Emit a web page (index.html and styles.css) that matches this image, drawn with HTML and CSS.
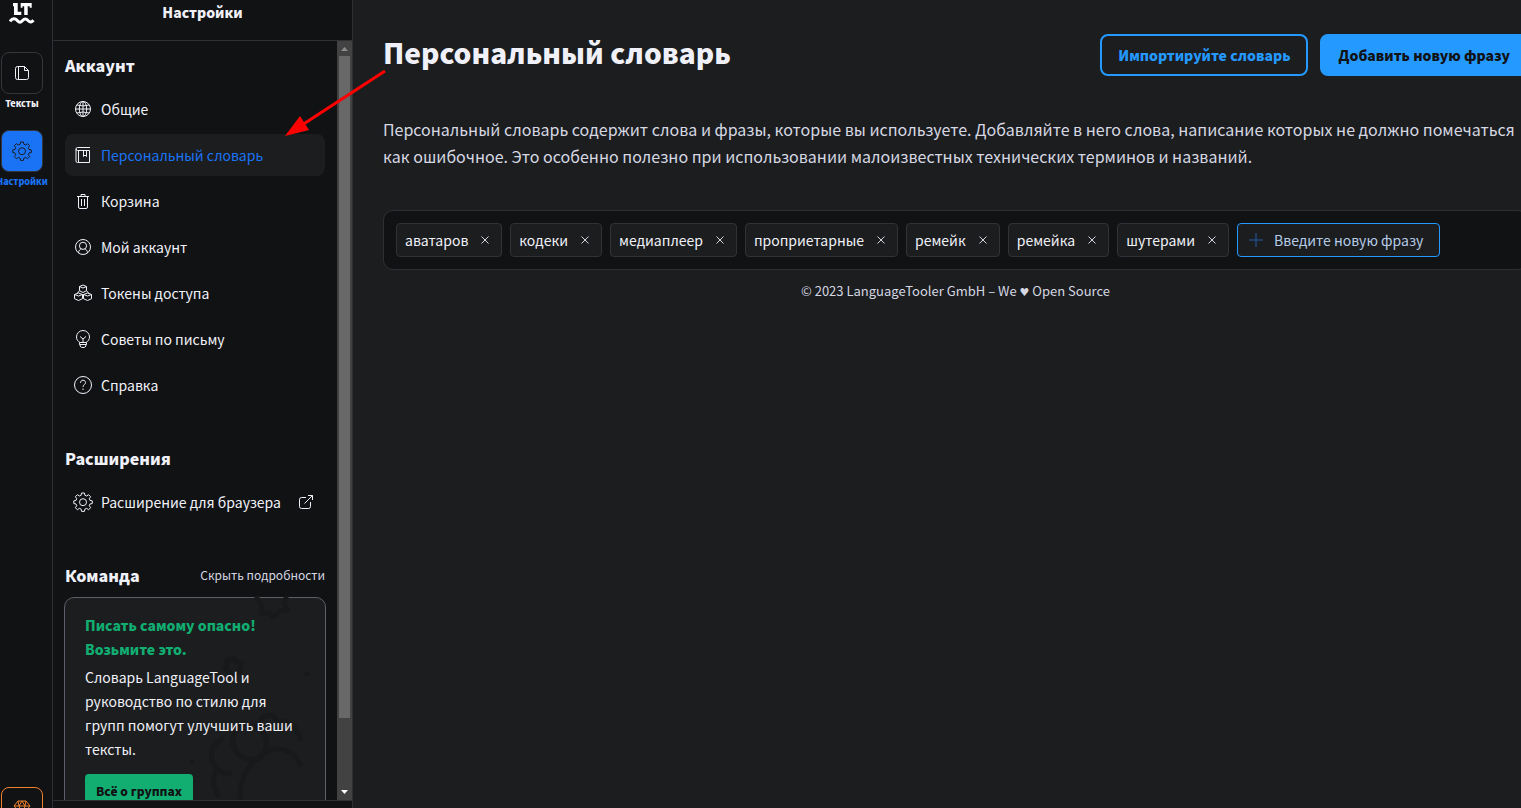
FILE: index.html
```html
<!DOCTYPE html>
<html lang="ru">
<head>
<meta charset="utf-8">
<title>Персональный словарь</title>
<link rel="stylesheet" href="styles.css">
</head>
<body>
<svg class="defs" width="0" height="0" aria-hidden="true">
  <symbol id="gear" viewBox="0 0 20 20"><path d="M8.6 1h2.8l.5 2.3 1.7.7 2-1.3 2 2-1.3 2 .7 1.7 2.3.5v2.6l-2.3.5-.7 1.7 1.3 2-2 2-2-1.3-1.7.7-.5 2.3H8.6l-.5-2.3-1.7-.7-2 1.3-2-2 1.3-2-.7-1.7L.8 11.500V8.900l2.200-.5.7-1.700-1.300-2 2-2 2 1.300 1.700-.7z"/><circle cx="10" cy="10.200" r="3.500"/></symbol>
  <symbol id="cross" viewBox="0 0 10 10"><path d="M1.500 1.500l7 7M8.500 1.500l-7 7"/></symbol>
</svg>
<div class="app">
  <nav class="rail" aria-label="Разделы">
    <a class="logo" href="#" aria-label="LanguageTool">
      <svg width="26" height="22" viewBox="0 0 26 22"><path class="logo-letters" d="M4 1h4.700v8.700h3.600V13H5V4.200H4zM11.700 1h11v4.700h-2V4.200h-2V13h-3.500V4.200h-1.700v1.500h-1.800z"/><path class="logo-wave" d="M1 19.500c2.500-3.500 5-3.500 7.500-.8 1.800 2 3 2 4.800 0 2.200-2.300 3.800-2.300 6 0 2 2 3.500 1.500 5.200-.4"/></svg>
    </a>
    <a class="rail-item" href="#">
      <span class="rail-icon"><svg width="16" height="16" viewBox="0 0 16 16"><path d="M3.500 1.500h7l4 4v7a2 2 0 0 1-2 2h-9a2 2 0 0 1-2-2v-9a2 2 0 0 1 2-2zM4.500 1.500v13M10.500 1.500v4h4"/></svg></span>
      <span class="rail-label">Тексты</span>
    </a>
    <a class="rail-item active" href="#" aria-current="page">
      <span class="rail-icon"><svg width="20" height="20"><use href="#gear"/></svg></span>
      <span class="rail-label">Настройки</span>
    </a>
    <a class="rail-item premium" href="#" aria-label="Премиум">
      <span class="rail-icon"><svg width="18" height="16" viewBox="0 0 18 16"><path d="M5 1h8l4 5-8 9-8-9zM1 6h16M5 1l1 5 3 9 3-9 1-5M6 6l3-5 3 5"/></svg></span>
    </a>
  </nav>

  <aside class="sidebar">
    <header class="sidebar-head">Настройки</header>
    <div class="sidebar-body">
      <div class="sidebar-scroll">
        <section class="group">
          <h2>Аккаунт</h2>
          <a class="item" href="#"><svg width="20" height="20" viewBox="0 0 20 20"><circle cx="10" cy="10" r="7.500"/><ellipse cx="10" cy="10" rx="3.700" ry="7.500"/><path d="M10 2.500v15M2.500 10h15M4 6q6 2 12 0M4 14q6-2 12 0"/></svg>Общие</a>
          <a class="item active" href="#" aria-current="page"><svg width="20" height="20" viewBox="0 0 20 20"><path d="M17 2.500H4.500a1.500 1.500 0 0 0 0 3h12v12h-12a1.500 1.500 0 0 1-1.500-1.500V4M5.500 5.500v12M10.500 5.500v6l1.500-1.500 1.500 1.500v-6"/></svg>Персональный словарь</a>
          <a class="item" href="#"><svg width="20" height="20" viewBox="0 0 20 20"><path d="M4 5.500h12M8 5.500v-2h4v2M5.500 5.500v10.500q0 1.500 1.500 1.500h6q1.500 0 1.500-1.500V5.500M8.500 8v7M11.500 8v7"/></svg>Корзина</a>
          <a class="item" href="#"><svg width="20" height="20" viewBox="0 0 20 20"><circle cx="10" cy="10" r="7.500"/><circle cx="10" cy="8.800" r="3.600"/><path d="M5.500 16c0-2.500 1.500-3.700 3-4M14.500 16c0-2.500-1.500-3.700-3-4"/></svg>Мой аккаунт</a>
          <a class="item" href="#"><svg width="20" height="20" viewBox="0 0 20 20"><path d="M6.500 3.500 10 2l3.500 1.500v4.200L10 9.500 6.500 7.700zM6.500 3.500 10 5l3.500-1.500M1.500 11.500 5.500 10l4 1.500v4.200l-4 1.800-4-1.800zM1.500 11.500 5.500 13l4-1.500M10.500 11.500l4-1.500 4 1.500v4.200l-4 1.800-4-1.800zM10.500 11.500l4 1.500 4-1.500M6.500 7.700 4 10.500M13.500 7.700l2.500 2.800"/></svg>Токены доступа</a>
          <a class="item" href="#"><svg width="20" height="20" viewBox="0 0 20 20"><path d="M7 13.500C4.800 12.300 3.500 10.500 3.500 8a6.500 6.500 0 0 1 13 0c0 2.500-1.300 4.300-3.500 5.500zM6.500 13.500v2h7v-2M7 15.500c0 2.500 1 3 3 3s3-.5 3-3M10 13V9.500M7 7.500l3 2.500 3-2.500"/></svg>Советы по письму</a>
          <a class="item" href="#"><svg width="20" height="20" viewBox="0 0 20 20"><circle cx="10" cy="10" r="8.500"/><path d="M7.500 7.800c0-1.500 1-2.600 2.500-2.600s2.500 1 2.500 2.400c0 2-2.500 2-2.500 4.400M10 13.500v1.500"/></svg>Справка</a>
        </section>
        <section class="group">
          <h2>Расширения</h2>
          <a class="item" href="#"><svg width="20" height="20"><use href="#gear"/></svg>Расширение для браузера<svg class="external" width="16" height="16" viewBox="0 0 16 16"><path d="M8 3.500H3.500a2 2 0 0 0-2 2v7a2 2 0 0 0 2 2h7a2 2 0 0 0 2-2V8M10 1.500h4.500V6M14.500 1.500l-8 8"/></svg></a>
        </section>
        <section class="group">
          <div class="group-head"><h2>Команда</h2><button class="hide" type="button">Скрыть подробности</button></div>
          <div class="card">
            <svg class="card-art" width="130" height="206" viewBox="0 0 130 206" aria-hidden="true"><path d="M62 0l5 8-1 7 7 0 6 4 5-6 8-1-3-7 2-5M39 60l3 4 5 1-2 4 1 5-5 0-4 3-3-4-4-2 2-4 0-5 4 0zM47 127a18 18 0 1 0 19 32M66 159a20 20 0 0 0-5-31M66 121q10-9 17 3 17-2 22 17M27 141q-16 8-8 26 5 9 16 8M20 175q-4 12 3 22M46 204c-8-34 38-76 59-38"/><path class="dot" d="M112 76h0M-3 164h0"/></svg>
            <h3>Писать самому опасно! Возьмите это.</h3>
            <p>Словарь LanguageTool и руководство по стилю для групп помогут улучшить ваши тексты.</p>
            <button class="card-button" type="button">Всё о группах</button>
          </div>
        </section>
      </div>
      <div class="scrollbar" aria-hidden="true">
        <svg class="up" width="15" height="15" viewBox="0 0 15 15"><path d="M4 10l3.500-4L11 10z"/></svg>
        <div class="track"><div class="thumb"></div></div>
        <svg class="down" width="15" height="17" viewBox="0 0 15 17"><path d="M4 7h7l-3.500 4z"/></svg>
      </div>
    </div>
    <footer class="sidebar-foot"></footer>
  </aside>

  <main class="main">
    <div class="content">
      <header class="page-head">
        <h1>Персональный словарь</h1>
        <button class="button" type="button">Импортируйте словарь</button>
        <button class="button primary" type="button">Добавить новую фразу</button>
      </header>
      <p class="lead">Персональный словарь содержит слова и фразы, которые вы используете. Добавляйте в него слова, написание которых не должно помечаться как ошибочное. Это особенно полезно при использовании малоизвестных технических терминов и названий.</p>
      <div class="words">
        <span class="word">аватаров<button type="button" aria-label="Удалить аватаров"><svg width="10" height="10"><use href="#cross"/></svg></button></span>
        <span class="word">кодеки<button type="button" aria-label="Удалить кодеки"><svg width="10" height="10"><use href="#cross"/></svg></button></span>
        <span class="word">медиаплеер<button type="button" aria-label="Удалить медиаплеер"><svg width="10" height="10"><use href="#cross"/></svg></button></span>
        <span class="word">проприетарные<button type="button" aria-label="Удалить проприетарные"><svg width="10" height="10"><use href="#cross"/></svg></button></span>
        <span class="word">ремейк<button type="button" aria-label="Удалить ремейк"><svg width="10" height="10"><use href="#cross"/></svg></button></span>
        <span class="word">ремейка<button type="button" aria-label="Удалить ремейка"><svg width="10" height="10"><use href="#cross"/></svg></button></span>
        <span class="word">шутерами<button type="button" aria-label="Удалить шутерами"><svg width="10" height="10"><use href="#cross"/></svg></button></span>
        <label class="new-word"><svg width="14" height="14" viewBox="0 0 14 14"><path d="M7 0v14M0 7h14"/></svg><input type="text" placeholder="Введите новую фразу" aria-label="Новая фраза"></label>
      </div>
      <footer class="copyright">© 2023 LanguageTooler GmbH – We <span class="heart">♥</span> Open Source</footer>
    </div>
  </main>
</div>
<svg class="pointer" width="104" height="70" viewBox="0 0 104 70" aria-hidden="true"><path class="shaft" d="M101 4L18 58"/><path class="tip" d="M1 69l15-20 9 14z"/></svg>
</body>
</html>
```
FILE: styles.css
```css
* { box-sizing: border-box; }
body {
  margin: 0;
  background: #1c1d1f;
  color: #f0f1f8;
  font: 14px/24px "Noto Sans CJK SC", "Noto Sans", sans-serif;
}
h1, h2, h3, p { margin: 0; }
a { color: inherit; text-decoration: none; }
button, input { font: inherit; color: inherit; }
button { padding: 0; border: 0; background: none; cursor: pointer; white-space: nowrap; }
svg { display: block; flex: none; fill: none; stroke: currentColor; }
.defs { position: absolute; }
.app { display: flex; height: 100vh; overflow: hidden; }

.rail {
  flex: none;
  width: 53px;
  padding: 2px 8px 0 0;
  display: flex;
  flex-direction: column;
  align-items: center;
  background: #111214;
  border-right: 1px solid #2e3035;
  overflow: hidden;
}
.logo { height: 50px; }
.logo-letters { fill: #fff; stroke: none; }
.logo-wave { stroke: #fff; stroke-width: 3; }
.rail-item { height: 78px; display: flex; flex-direction: column; align-items: center; }
.rail-icon {
  width: 42px;
  height: 42px;
  display: grid;
  place-items: center;
  border: 1px solid #34363b;
  border-radius: 8px;
}
.rail-label { font-size: 9px; line-height: 20px; font-weight: 900; }
.active .rail-icon { background: #1a73f5; border-color: #34363b; color: #1c1d1f; }
.active .rail-label { color: #1a73f5; }
.premium { height: 42px; margin: auto 0 -21px; color: #ee812e; }
.premium .rail-icon { border-color: #ee812e; }

.sidebar {
  flex: none;
  width: 300px;
  display: flex;
  flex-direction: column;
  background: #111214;
  border-right: 1px solid #2e3035;
}
.sidebar-head {
  padding-bottom: 16px;
  border-bottom: 1px solid #2e3035;
  text-align: center;
  font-weight: 900;
}
.sidebar-body { flex: 1; min-height: 0; display: flex; }
.sidebar-scroll { flex: 1; min-width: 0; padding: 12px; overflow: hidden; }
.sidebar-foot { height: 8px; border-top: 1px solid #2e3035; }
.group { margin-bottom: 40px; }
.group h2 { font-size: 16px; line-height: 24px; font-weight: 900; }
.item {
  height: 42px;
  margin-top: 4px;
  padding: 0 8px;
  display: flex;
  align-items: center;
  gap: 8px;
  border-radius: 8px;
  white-space: nowrap;
}
h2 + .item { margin-top: 11px; }
.item.active { background: #1c1d1f; color: #1a73f5; }
.item.active svg { color: #f0f1f8; }
.item .external { margin: 0 3px 0 auto; }
.group-head { display: flex; justify-content: space-between; margin-bottom: 10px; }
.hide { font-size: 12px; color: #d5d8e2; }
.card {
  position: relative;
  margin: 0 -1px;
  padding: 15px 20px;
  background: #1c1d1f;
  border: 1px solid #5d5f68;
  border-radius: 10px;
}
.card-art { position: absolute; top: 0; right: 0; overflow: visible; color: #18191b; stroke-width: 5; stroke-linejoin: round; stroke-linecap: round; }
.card h3, .card p, .card-button { position: relative; }
.card h3 { width: 180px; font-size: 14px; font-weight: 900; color: #11ad71; }
.card p { margin: 4px 0 13px; }
.card-button {
  height: 34px;
  padding: 0 11px;
  border-radius: 4px;
  background: #11ad71;
  color: #111214;
  font-size: 12px;
  font-weight: 900;
}

.scrollbar { flex: none; width: 15px; display: flex; flex-direction: column; background: #424242; stroke: none; }
.scrollbar svg { stroke: none; }
.up { fill: #8b8b8b; }
.down { fill: #fff; }
.track { flex: 1; padding: 0 2px; }
.thumb { height: 91%; background: #686868; }

.main { flex: 1; min-width: 0; overflow: hidden; }
.content { margin: 34px -7px 0 30px; }
.page-head { display: flex; gap: 12px; align-items: flex-start; }
h1 { flex: 1; font-size: 28px; line-height: 36px; font-weight: 900; }
.button {
  height: 42px;
  padding: 0 16px;
  border: 2px solid #2499ff;
  border-radius: 8px;
  color: #2499ff;
  font-weight: 900;
}
.button.primary { background: #2499ff; color: #111214; }
.lead { margin: 40px 0; font-size: 16px; line-height: 27px; color: #d5d8e2; }
.words {
  display: flex;
  flex-wrap: wrap;
  gap: 8px;
  padding: 12px;
  background: #111214;
  border: 1px solid #2e3035;
  border-radius: 10px;
}
.word, .new-word {
  height: 34px;
  padding: 0 7px 0 8px;
  display: flex;
  align-items: center;
  gap: 8px;
  background: #1c1d1f;
  border: 1px solid #303237;
  border-radius: 4px;
}
.word button { width: 18px; height: 18px; display: grid; place-items: center; color: #d5d8e2; }
.new-word { width: 203px; padding: 0 8px 0 11px; gap: 11px; border-color: #2499ff; }
.new-word svg { color: #1f5aa8; }
.new-word input { flex: 1; min-width: 0; padding: 0; border: 0; outline: 0; background: none; }
.new-word input::placeholder { color: #b4cbe6; opacity: 1; }
.copyright { margin-top: 9px; text-align: center; font-size: 13px; color: #d5d8e2; }
.heart { font-family: "DejaVu Sans", sans-serif; font-size: 11px; }

.pointer { position: absolute; left: 284px; top: 67px; stroke: none; }
.shaft { stroke: #f00; stroke-width: 3; }
.tip { fill: #f00; }
```
